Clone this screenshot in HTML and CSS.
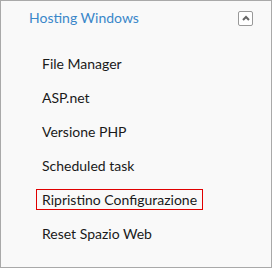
FILE: index.html
```html
<!DOCTYPE html>
<html lang="it">
<head>
    <meta charset="UTF-8">
    <title>Hosting Windows</title>
    <link rel="stylesheet" href="styles.css">
</head>
<body>
    <div class="panel">
        <div class="panel-head">
            <span class="panel-title">Hosting Windows</span>
            <button class="toggle" type="button">
                <svg width="8" height="6" viewBox="0 0 8 6"><path d="M1 5 L4 2 L7 5" fill="none" stroke="#666" stroke-width="2"/></svg>
            </button>
        </div>
        <ul class="menu">
            <li><a href="#">File Manager</a></li>
            <li><a href="#">ASP.net</a></li>
            <li><a href="#">Versione PHP</a></li>
            <li><a href="#">Scheduled task</a></li>
            <li><a href="#" class="active">Ripristino Configurazione</a></li>
            <li><a href="#">Reset Spazio Web</a></li>
        </ul>
    </div>
</body>
</html>
```
FILE: styles.css
```css
body {
    margin: 0;
    font-family: Lato, "Liberation Sans", sans-serif;
    background: #f9f9f9;
}
.panel {
    width: 270px;
    height: 266px;
    border: 1px solid #a9a9a9;
    background: #f9f9f9;
}
.panel-head {
    display: flex;
    justify-content: space-between;
    align-items: center;
    padding: 8px 18px 0 28px;
}
.panel-title {
    font-size: 14px;
    line-height: 18px;
    color: #3a87c9;
}
.toggle {
    width: 15px;
    height: 15px;
    padding: 0;
    border: 1px solid #999;
    border-radius: 2px;
    background: #fff;
    display: flex;
    justify-content: center;
    align-items: center;
}
.menu {
    list-style: none;
    margin: 0;
    padding: 0 0 0 35px;
}
.menu li {
    height: 34px;
    display: flex;
    align-items: center;
}
.menu li:first-child {
    margin-top: 19px;
}
.menu a {
    font-size: 14px;
    color: #1a1a1a;
    text-decoration: none;
    padding: 1px 5px;
    border: 1px solid transparent;
}
.menu a.active {
    border-color: #e00000;
}
```
